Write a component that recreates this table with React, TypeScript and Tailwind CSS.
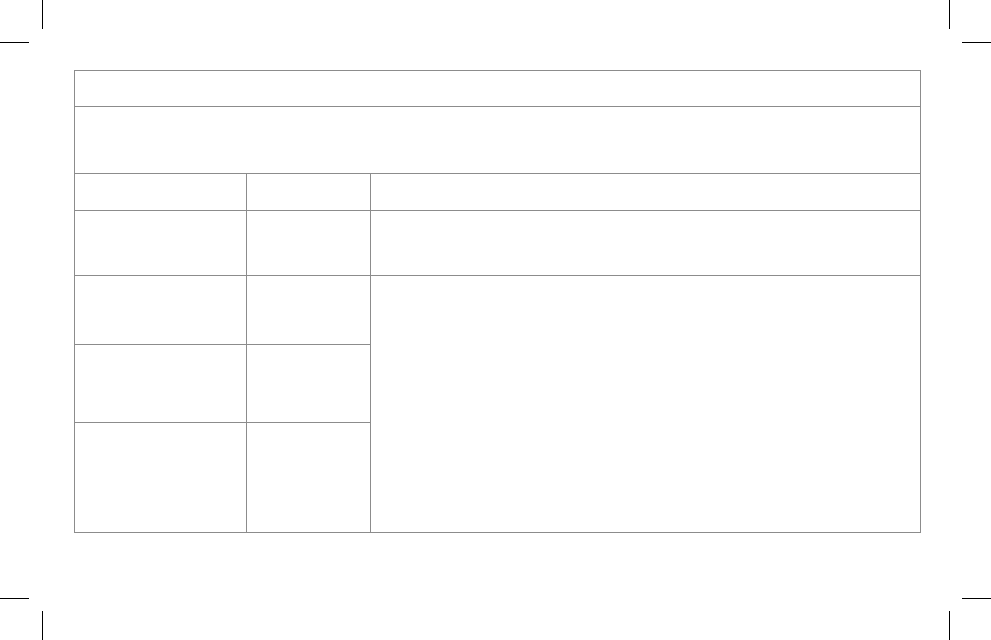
import React from 'react'

// crop marks around the printable sheet
function CropMarks() {
  return (
    <>
      <div className="absolute left-[42px] top-0 h-[29px] w-px bg-black" />
      <div className="absolute left-0 top-[42px] h-px w-[29px] bg-black" />
      <div className="absolute left-[949px] top-0 h-[29px] w-px bg-black" />
      <div className="absolute left-[962px] top-[42px] h-px w-[29px] bg-black" />
      <div className="absolute left-0 top-[598px] h-px w-[29px] bg-black" />
      <div className="absolute left-[42px] top-[611px] h-[29px] w-px bg-black" />
      <div className="absolute left-[949px] top-[611px] h-[29px] w-px bg-black" />
      <div className="absolute left-[962px] top-[598px] h-px w-[29px] bg-black" />
    </>
  )
}

export default function App() {
  return (
    <div className="relative h-[640px] w-[991px] overflow-hidden bg-white pl-[74px] pt-[70px]">
      <CropMarks />
      <div className="grid w-[847px] grid-cols-[171px_123px_549px] grid-rows-[35px_66px_36px_64px_68px_77px_109px] gap-px bg-[#8c8c8c] p-px">
        <div className="col-span-3 bg-white" />
        <div className="col-span-3 bg-white" />
        <div className="bg-white" />
        <div className="bg-white" />
        <div className="bg-white" />
        <div className="bg-white" />
        <div className="bg-white" />
        <div className="bg-white" />
        <div className="bg-white" />
        <div className="bg-white" />
        <div className="row-span-3 bg-white" />
        <div className="bg-white" />
        <div className="bg-white" />
        <div className="bg-white" />
        <div className="bg-white" />
      </div>
    </div>
  )
}
